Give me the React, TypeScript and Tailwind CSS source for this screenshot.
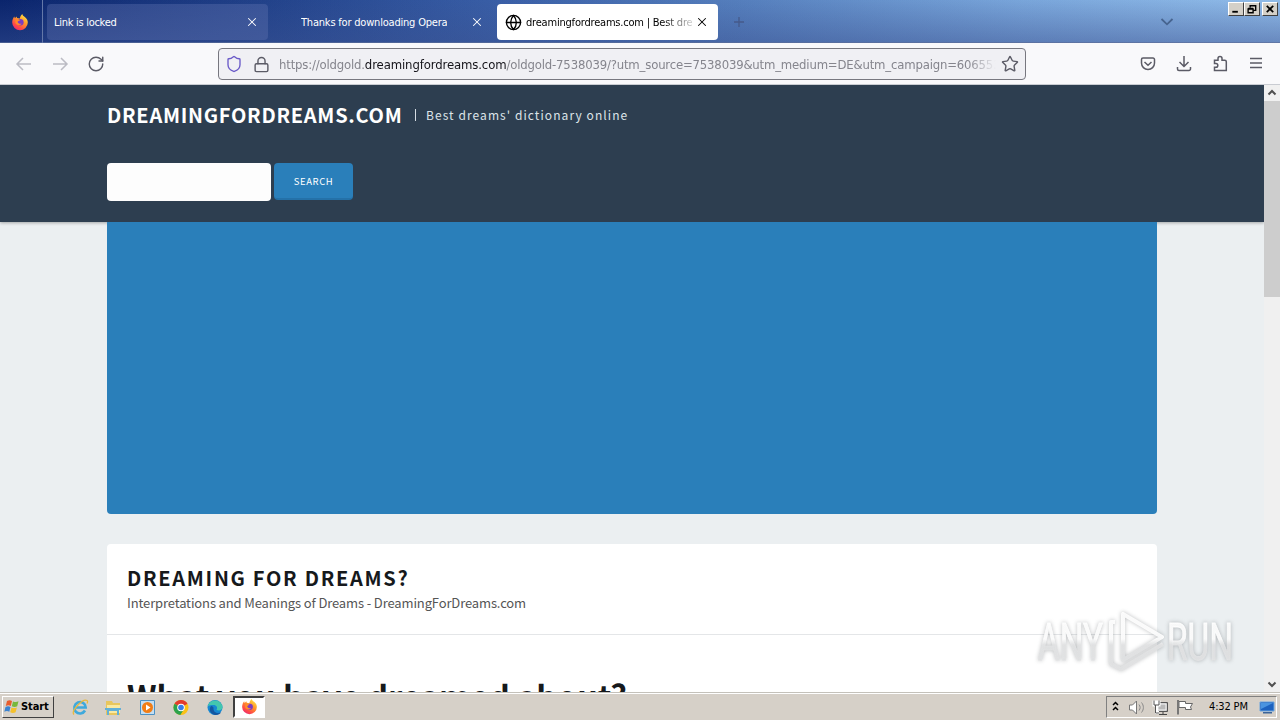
import type { ReactNode } from "react";
import { Globe, Lock, RotateCw, Shield, Star, X } from "lucide-react";

function FirefoxIcon({ size = 18 }: { size?: number }) {
  return (
    <svg width={size} height={size} viewBox="0 0 18 18">
      <defs>
        <linearGradient id="fox" x1="0.85" y1="0" x2="0.2" y2="1">
          <stop offset="0" stopColor="#fff04a" />
          <stop offset="0.4" stopColor="#ff9a2a" />
          <stop offset="0.75" stopColor="#ff4b45" />
          <stop offset="1" stopColor="#e6267a" />
        </linearGradient>
      </defs>
      <path
        d="M11.3 1c.3 1.3 1.2 2.1 2.5 3.1 2 1.5 3 3.4 3 5.4A7.8 7.8 0 0 1 9 17.200 7.800 7.800 0 0 1 1.200 9.500c0-2.300.8-4.700 2.100-6.100l.6 1.800L5.600 3.500l.5 1.600 2.800.4c.2-1.800 1-3.400 2.400-4.500z"
        fill="url(#fox)"
      />
      <circle cx="9.300" cy="9.300" r="3.300" fill="#7a3cc4" />
      <path d="M4.500 6.700c2-.9 3.800-.4 4.900.8-1.200 0-1.900.6-2.800 1.200.5 1.800 2 2.500 4 1.800-1 2.200-5 2.400-6.300-.7z" fill="#ff8a2b" />
    </svg>
  );
}

interface TabProps {
  title: string;
  icon?: ReactNode;
  className: string;
  titleClass: string;
}

function Tab({ title, icon, className, titleClass }: TabProps) {
  return (
    <div className={`flex h-9 shrink-0 items-center rounded ${className}`}>
      {icon}
      <span className={`overflow-hidden pt-[3px] whitespace-nowrap ${titleClass}`}>{title}</span>
      <X size={14} strokeWidth={1.8} className="ml-auto shrink-0" />
    </div>
  );
}

function TabBar() {
  return (
    <div className="flex h-[43px] border-b border-[#6a7a98] bg-[linear-gradient(90deg,#0a246c_0%,#1a3a84_20%,#2c529e_38%,#4672b5_58%,#6a9ad4_80%,#82b2e4_100%)]">
      <div className="flex h-[43px] w-full bg-[linear-gradient(100deg,rgba(40,60,130,0)_0%,rgba(200,225,250,0.12)_60%,rgba(200,225,250,0.2)_100%),linear-gradient(180deg,rgba(50,80,150,0)_0%,rgba(46,72,140,0.6)_100%)] text-[11px]">
        <div className="flex w-[43px] items-center justify-center border-r border-[#6478a8] pr-[3px]">
          <FirefoxIcon />
        </div>
        <div className="flex pt-1 pl-1">
          <Tab
            title="Link is locked"
            className="w-[221px] bg-[#6679b5]/35 pr-[9px] pl-[7px] text-white"
            titleClass="tracking-[-0.28px]"
          />
          <Tab
            title="Thanks for downloading Opera"
            className="w-[229px] pr-[13px] pl-[33px] text-white"
            titleClass="tracking-[-0.2px]"
          />
          <Tab
            title="dreamingfordreams.com | Best dreams"
            icon={<Globe size={17} strokeWidth={1.9} className="mr-[4px] shrink-0" />}
            className="w-[221px] bg-white pr-[9px] pl-[8px] text-black"
            titleClass="w-[166px] tracking-[-0.2px] [mask-image:linear-gradient(90deg,#000_82%,transparent_104%)]"
          />
        </div>
        <svg width="14" height="14" viewBox="0 0 14 14" className="mt-[15px] ml-[14px]" stroke="#465a8a" strokeWidth="1.300">
          <path d="M7 2v10M2 7h10" />
        </svg>
        <svg width="14" height="9" viewBox="0 0 14 9" className="mt-[17px] ml-auto" stroke="#47648f" strokeWidth="1.800" fill="none">
          <path d="M1.500 2 7 7.300 12.500 2" />
        </svg>
        <div className="mt-[2px] mr-[2px] ml-[54px] flex">
          <CaptionButton>
            <path d="M3 9.500h6" strokeWidth="2" />
          </CaptionButton>
          <CaptionButton>
            <path d="M5 5V3h6v5H9M5 3h6M2.800 6.500h5.400v4H2.800zM2.800 6h5.400" strokeWidth="1.500" />
          </CaptionButton>
          <div className="ml-[2px]">
            <CaptionButton>
              <path d="m3.500 3 7 7M10.500 3l-7 7" strokeWidth="1.900" />
            </CaptionButton>
          </div>
        </div>
      </div>
    </div>
  );
}

function CaptionButton({ children }: { children: ReactNode }) {
  return (
    <div className="h-[14px] w-4 border border-t-white border-r-[#404040] border-b-[#404040] border-l-white bg-[#d4d0c8]">
      <svg width="14" height="12" viewBox="0 0 14 13" fill="none" stroke="#000">
        {children}
      </svg>
    </div>
  );
}

function NavBar() {
  return (
    <div className="flex h-[42px] items-center border-b border-[#c9ccd2] bg-[#f9f9fb] pt-px text-[#5b5b66]">
      <svg width="96" height="20" viewBox="0 0 96 20" className="ml-2 shrink-0" fill="none" stroke="#bcbcc4" strokeWidth="1.500">
        <path d="M23 10H9M15 4l-6 6 6 6M45 10h14M53 4l6 6-6 6" />
      </svg>
      <RotateCw size={18} strokeWidth={1.9} className="-ml-[17px] shrink-0" />
      <div className="ml-[113px] flex h-8 w-[808px] shrink-0 items-center rounded border border-[#77777f] bg-[#f0f0f4] pr-[6px] pl-[6px]">
        <Shield size={18} strokeWidth={1.8} className="shrink-0 text-[#6a5ac8]" />
        <Lock size={17} strokeWidth={2} className="ml-[10px] shrink-0" />
        <div className="ml-[9px] w-[717px] overflow-hidden pt-px text-[13px] tracking-[-0.18px] whitespace-nowrap text-[#85858d] [mask-image:linear-gradient(90deg,#000_96%,transparent)]">
          https://oldgold.<span className="tracking-[-0.12px] text-[#15141a]">dreamingfordreams.com</span>
          /oldgold-7538039/?utm_source=7538039&amp;utm_medium=DE&amp;utm_campaign=606553
        </div>
        <Star size={18} strokeWidth={1.9} className="ml-auto shrink-0" />
      </div>
      <svg width="126" height="20" viewBox="0 0 126 20" className="ml-[113px] shrink-0" fill="none" stroke="currentColor" strokeWidth="1.500">
        <path d="M4 4h10a1.500 1.500 0 0 1 1.500 1.500V9a6.500 6.500 0 0 1-13 0V5.500A1.500 1.500 0 0 1 4 4zM5.500 8 9 11.300 12.500 8" />
        <path d="M45 2v10M40.500 8l4.500 4.500L49.500 8M38.500 13v2a1.500 1.500 0 0 0 1.500 1.500h10a1.500 1.500 0 0 0 1.500-1.500v-2" />
        <path d="M75.500 8V6.300h3.500V4.500a2 2 0 0 1 4 0v1.800h2.800a1.500 1.500 0 0 1 1.500 1.500v8.700H75.500v-3.300h1.500a1.800 1.800 0 0 0 0-3.600h-1.500z" />
        <path d="M111 4.500h12M111 9h12M111 13.500h12" />
      </svg>
    </div>
  );
}

function Scrollbar() {
  return (
    <div className="flex w-4 shrink-0 flex-col bg-[#f0f0f0]">
      <svg width="16" height="16" viewBox="0 0 16 16" fill="none" stroke="#505050" strokeWidth="2">
        <path d="m4.500 9.500 3.500-3.500 3.500 3.500" />
      </svg>
      <div className="h-[196px] bg-[#cdcdcd]" />
      <svg width="16" height="16" viewBox="0 0 16 16" className="mt-auto" fill="none" stroke="#505050" strokeWidth="2">
        <path d="m4.500 6.500 3.500 3.500 3.500-3.500" />
      </svg>
    </div>
  );
}

function Page() {
  return (
    <div className="flex min-h-0 flex-1 flex-col overflow-hidden bg-[#ebeff1] font-['Noto_Sans_CJK_SC',sans-serif]">
      <header className="h-[137px] shrink-0 bg-[#2d3e50] pl-[107px] shadow-[0_1px_3px_rgba(0,0,0,0.3)]">
        <div className="flex h-[60px] items-center">
          <h1 className="w-[308px] shrink-0 text-[20px] font-bold tracking-[0.72px] whitespace-nowrap text-white">
            DREAMINGFORDREAMS.COM
          </h1>
          <span className="mr-[10px] h-3 w-px bg-[#d5dce2]" />
          <span className="text-[12px] tracking-[1.07px] whitespace-nowrap text-[#dde4e9]">Best dreams' dictionary online</span>
        </div>
        <div className="mt-[18px] flex gap-[3px]">
          <div className="h-[38px] w-[164px] rounded bg-[#fdfdfd]" />
          <button className="h-[37px] w-[79px] rounded border-b-2 border-[#2471a8] bg-[#2a7fba] pt-[2px] text-[9.5px] tracking-[0.6px] text-white">
            SEARCH
          </button>
        </div>
      </header>
      <main className="ml-[107px] w-[1050px]">
        <div className="h-[292px] rounded-b bg-[#2a7fba]" />
        <article className="mt-[30px] h-[300px] rounded bg-white">
          <div className="h-[91px] border-b border-[#e4e6e8] px-5 pt-[19px]">
            <h2 className="text-[20px] leading-[30px] font-bold tracking-[1.7px] text-[#16191c]">DREAMING FOR DREAMS?</h2>
            <p className="text-[13px] leading-5 tracking-[-0.13px] text-[#555]">
              Interpretations and Meanings of Dreams - DreamingForDreams.com
            </p>
          </div>
          <h3 className="mt-[39px] px-5 text-[32.3px] leading-[42px] font-bold text-[#16191c]">What you have dreamed about?</h3>
        </article>
      </main>
    </div>
  );
}

function Watermark() {
  return (
    <div className="absolute top-[605px] left-[1034px] drop-shadow-[0_0_2px_rgba(90,95,100,0.45)]">
      <svg width="205" height="72" viewBox="0 0 205 72" fill="none">
        <defs>
          <linearGradient id="mark" gradientUnits="userSpaceOnUse" x1="0" y1="34" x2="0" y2="40">
            <stop offset="0" stopColor="#fff" stopOpacity="0.9" />
            <stop offset="1" stopColor="#e2e3e4" stopOpacity="0.9" />
          </linearGradient>
        </defs>
        <g fill="url(#mark)" stroke="url(#mark)" strokeWidth="0.800" fontFamily="Roboto, sans-serif" fontSize="51">
          <text x="4" y="55" textLength="65" lengthAdjust="spacingAndGlyphs">ANY</text>
          <text x="133" y="55" textLength="66" lengthAdjust="spacingAndGlyphs">RUN</text>
        </g>
        <g stroke="url(#mark)" strokeWidth="4" strokeLinejoin="round">
          <path d="M89 9v46l39-23zM81 17h-4v42l10 5 42-25" />
        </g>
      </svg>
    </div>
  );
}

function Taskbar() {
  return (
    <div className="flex h-7 shrink-0 items-center border-t border-[#c4c1ba] bg-[#d6d0c8] shadow-[inset_0_1px_0_#fff]">
      <div className="ml-[2px] flex h-[22px] w-[52px] items-center border border-t-white border-r-[#404040] border-b-[#404040] border-l-white pl-px text-[11px] font-bold text-black">
        <svg width="16" height="15" viewBox="0 0 16 15" className="mr-px shrink-0">
          <path d="M3 2c2-1.200 3.500-1 5 0L6.800 7c-1.600-1-3.200-1-5 0z" fill="#e85d2c" />
          <path d="M9 2.400c2 1 3.800.9 5.500-.1l-1.300 5c-1.600 1-3.500 1-5.400 0z" fill="#78b83c" />
          <path d="M1.500 8c1.800-1 3.400-1 5 0l-1.200 4.800c-1.600-1-3.200-1-5 0z" fill="#3b83d0" />
          <path d="M7.500 8.400c2 1 3.700.9 5.400 0l-1.300 4.900c-1.700 1-3.500 1-5.400 0z" fill="#f4c02c" />
        </svg>
        <span className="pt-[2px] tracking-[-0.1px]">Start</span>
      </div>
      <svg width="155" height="22" viewBox="0 0 155 22" className="ml-[17px] shrink-0" fill="none">
        {/* Internet Explorer */}
        <path d="M14 14.500a5.700 5.700 0 1 1 .7-3H5" stroke="#3fa9dc" strokeWidth="2.600" />
        <path d="M3 18.500C-.5 15 12 2 16 4.500c1 .6.500 2 0 3" stroke="#e9b93c" strokeWidth="1.300" />
        {/* Explorer */}
        <path d="M35 5h6l1 2h7v12H35z" fill="#e8c65d" />
        <path d="M36 9h13v8H36z" fill="#fae9a0" />
        <path d="M37 19v-5h10v5M34 13h16" stroke="#62b0d8" strokeWidth="2" />
        {/* Media Player */}
        <path d="M69.500 4.500h14v14h-14z" fill="#c4def2" stroke="#4c91c4" />
        <circle cx="76.500" cy="11.500" r="5.500" fill="#f17d16" />
        <path d="m75 8.500 4.500 3-4.500 3z" fill="#fff" />
        {/* Chrome */}
        <circle cx="110" cy="11.500" r="7.500" fill="#fbc116" />
        <path d="M110 11.500 103.500 7.700a7.500 7.500 0 0 1 13 0z" fill="#e33b2e" />
        <path d="M110 11.500 103.500 7.700a7.500 7.500 0 0 0 5.800 11.300l3.500-5.500z" fill="#2da24c" />
        <circle cx="110" cy="11.500" r="3.800" fill="#fff" />
        <circle cx="110" cy="11.500" r="2.800" fill="#387de8" />
        {/* Edge */}
        <circle cx="144" cy="11.500" r="7.500" fill="#1687d2" />
        <path d="M136.800 10A7.500 7.500 0 0 1 151.500 11c.2 3-3 4-6 3 1.500-2.500 0-5-3-5-2.500 0-4.500.5-5.700 1z" fill="#43c6ae" />
        <path d="M140 10c-3 4 0 8 4 9 3 .3 5-1 6-2.500-4 1.500-8-.5-7.500-4.500 0-1-1-2-2.500-2z" fill="#1456a0" />
      </svg>
      <div className="ml-[7px] flex h-[22px] w-8 items-center justify-center border-2 border-t-[#404040] border-r-white border-b-white border-l-[#404040] bg-white">
        <FirefoxIcon size={17} />
      </div>
      <div className="mr-[3px] ml-auto flex h-[22px] w-[171px] items-center border border-t-[#808080] border-r-white border-b-white border-l-[#808080] text-[11px] text-black">
        <svg width="83" height="20" viewBox="0 0 83 20" className="ml-1 shrink-0" fill="none">
          <path d="m2 8 2.500-2.500L7 8M2 13l2.500-2.500L7 13" stroke="#000" strokeWidth="1.500" />
          <path d="M18.500 8h3l4-4v13l-4-4h-3z" fill="#fff" stroke="#777" />
          <path d="M28 7.500c1.500 2 1.500 4 0 6M30.500 5.500c2.500 3 2.500 7 0 10" stroke="#888" />
          <path d="M45.500 5.500h11v9h-11z" fill="#b9b9b9" stroke="#555" />
          <path d="M47 7h8v6h-8z" stroke="#f4f4f4" />
          <path d="M48 17.500h8M52 15v2" stroke="#444" />
          <path d="M43 5h5v3h-5zM45.500 8v7.500H48" stroke="#fff" strokeWidth="3" />
          <path d="M43 3.500V8h5V3.500M44.500 8v8H48" stroke="#555" />
          <path d="M68 4.500h6.500v2h7l-2 3.500 1 2.500h-6v-2H68z" fill="#fff" stroke="#666" />
          <path d="M67 3v14.500" stroke="#777" strokeWidth="2" />
        </svg>
        <span className="ml-[15px] pt-[2px] tracking-[-0.15px] whitespace-nowrap">4:32 PM</span>
        <svg width="16" height="16" viewBox="0 0 16 16" className="mr-px ml-auto shrink-0">
          <path d="M1 3h14v9H1z" fill="#1d62bf" stroke="#6ba4df" />
          <path d="M2 4h12L2 10z" fill="#4a94e0" />
          <path d="M4 13h9v1.500H4z" fill="#3b6499" />
        </svg>
      </div>
    </div>
  );
}

export default function App() {
  return (
    <div className="relative flex h-[720px] w-[1280px] flex-col overflow-hidden font-['DejaVu_Sans_Condensed','DejaVu_Sans',sans-serif]">
      <TabBar />
      <NavBar />
      <div className="flex min-h-0 flex-1">
        <Page />
        <Scrollbar />
      </div>
      <Taskbar />
      <Watermark />
    </div>
  );
}
